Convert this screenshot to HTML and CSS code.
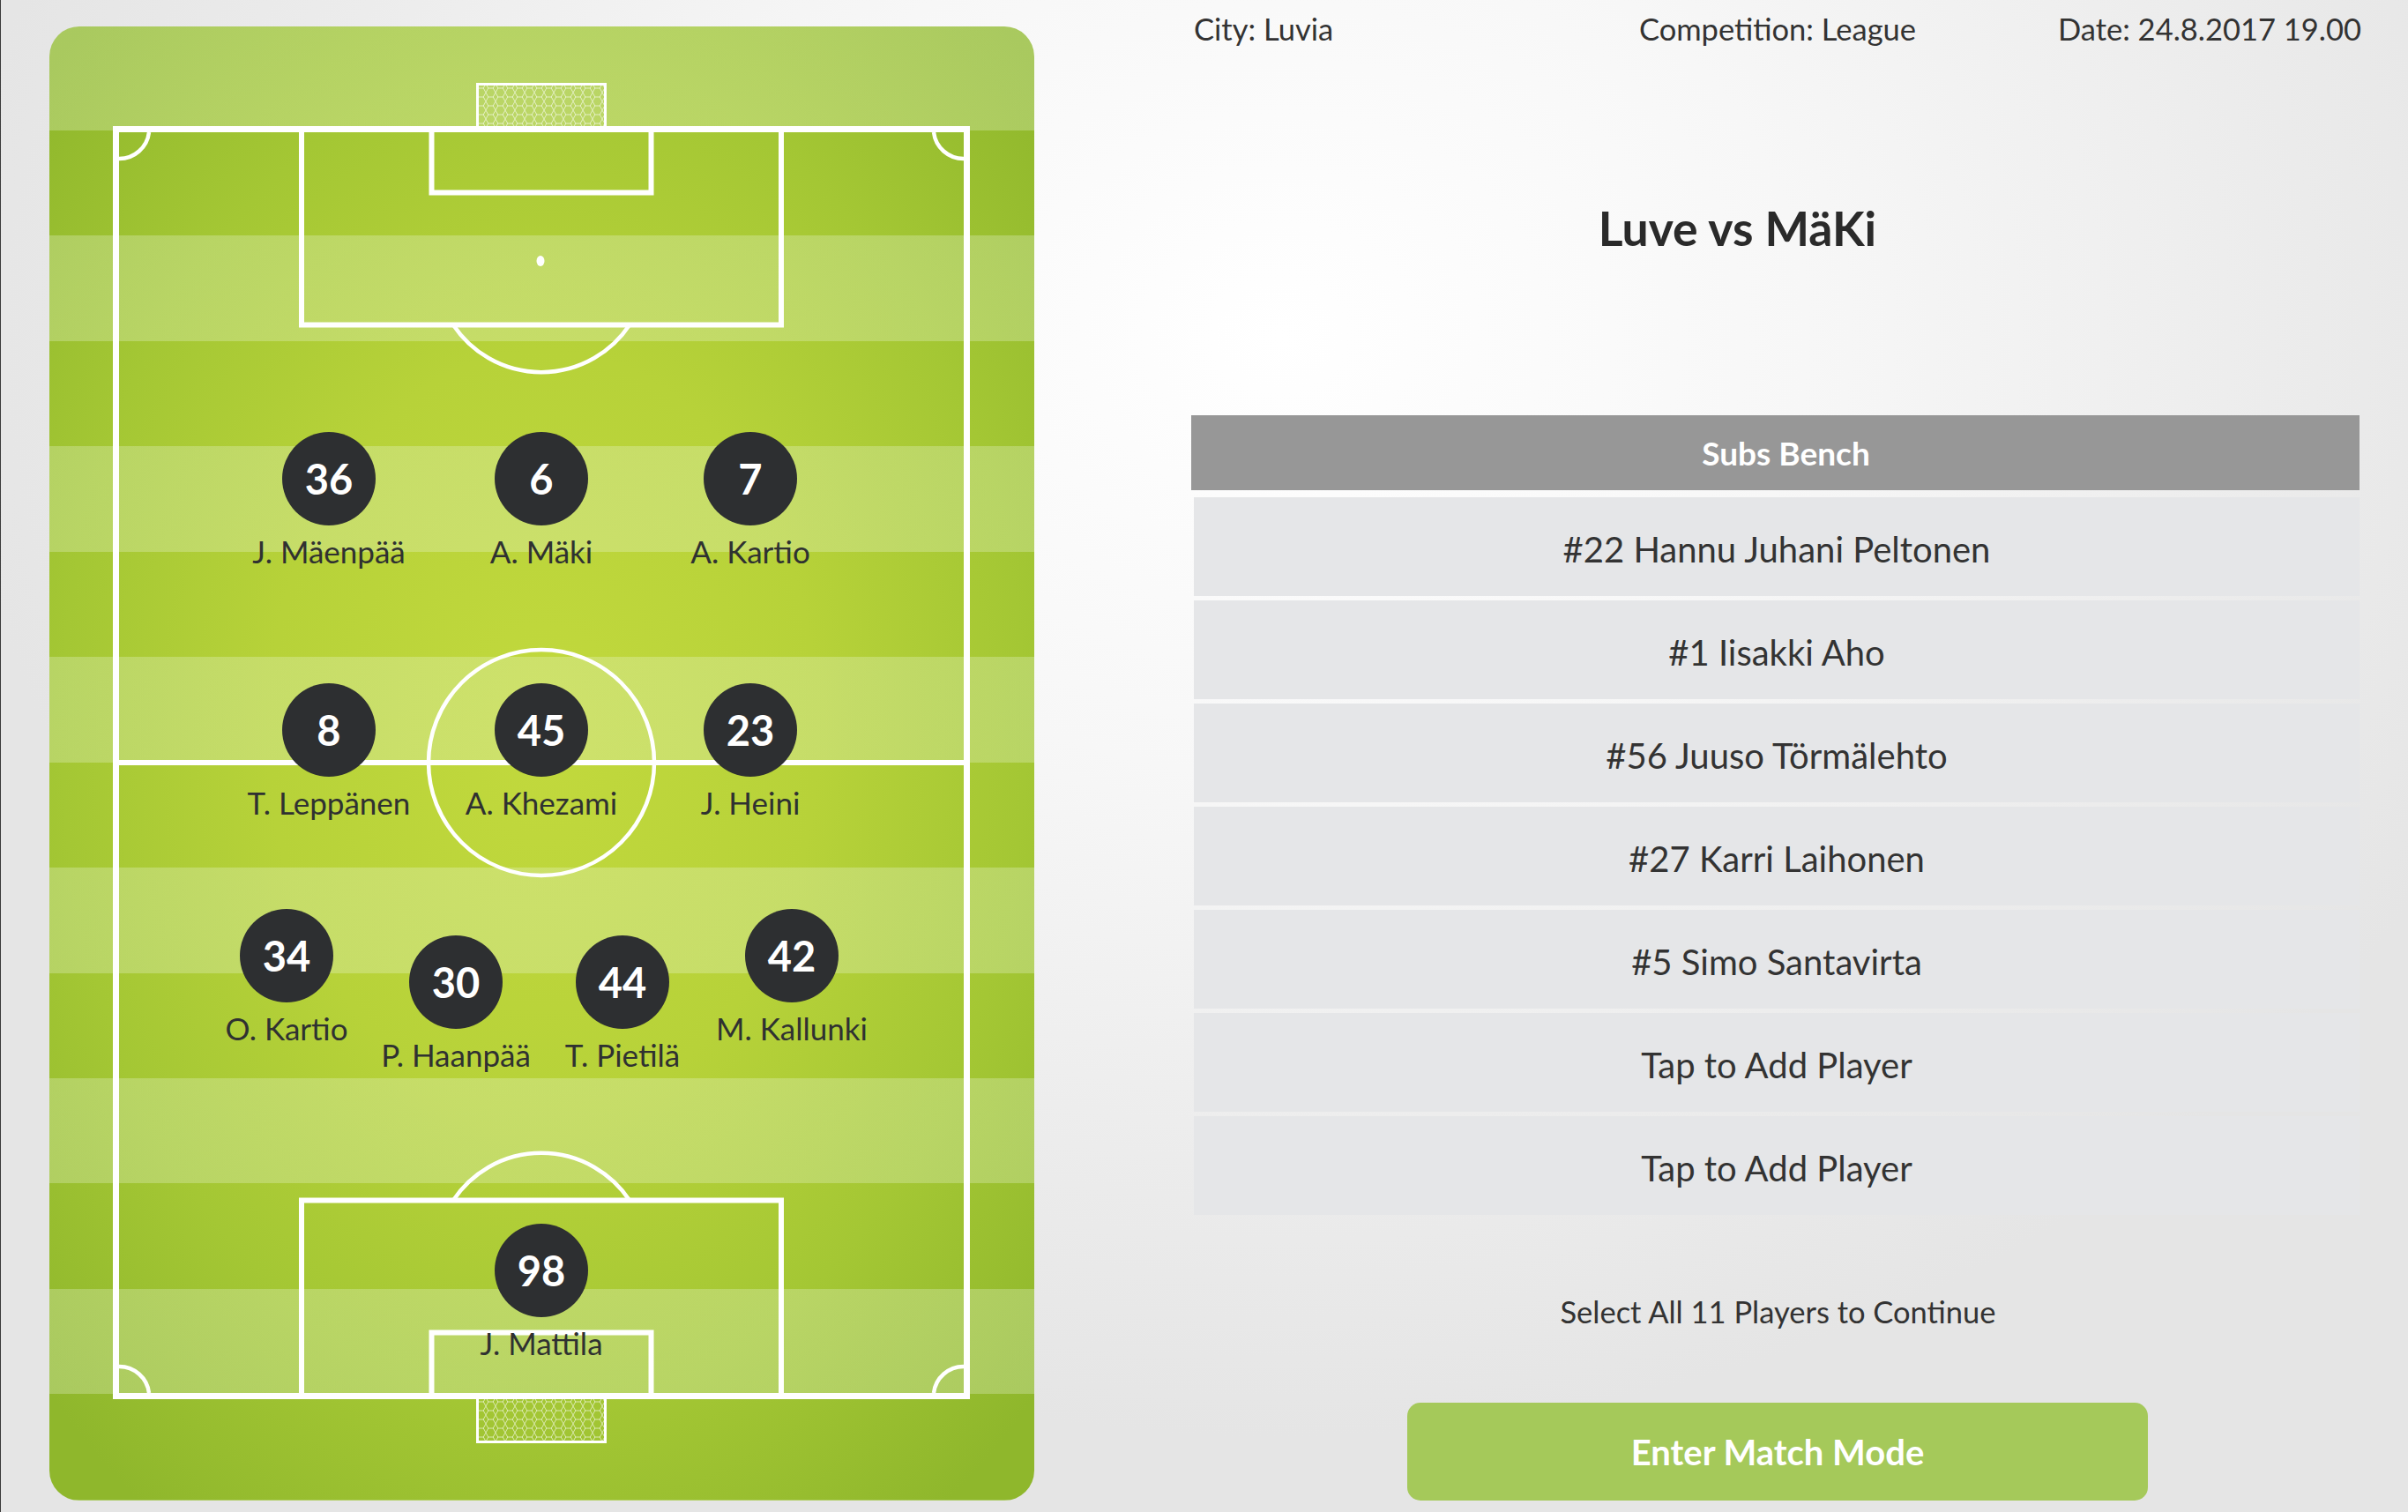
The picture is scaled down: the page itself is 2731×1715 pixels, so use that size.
FILE: index.html
```html
<!DOCTYPE html>
<html lang="fi">
<head>
<meta charset="utf-8">
<title>Luve vs MäKi – Lineup</title>
<link rel="stylesheet" href="styles.css">
</head>
<body>
<div class="screen">
  <section class="pitch">
    <svg class="markings" viewBox="0 0 1117 1672" width="1117" height="1672" aria-hidden="true">
      <defs>
        <pattern id="net" width="11" height="10" patternUnits="userSpaceOnUse">
          <path d="M2.75 0 L8.25 0 L11 5 L8.25 10 L2.75 10 L0 5 Z" fill="none" stroke="rgba(255,255,255,0.6)" stroke-width="1"/>
        </pattern>
      </defs>
      <g fill="none" stroke="#fff">
        <!-- goals -->
        <rect x="485.5" y="65.5" width="145" height="51" fill="url(#net)" stroke-width="3"/>
        <rect x="485.5" y="1553.5" width="145" height="52" fill="url(#net)" stroke-width="3"/>
        <!-- outer -->
        <rect x="75.5" y="116.5" width="965" height="1437" stroke-width="7"/>
        <line x1="75.5" y1="835" x2="1040.5" y2="835" stroke-width="6"/>
        <circle cx="558" cy="835" r="128" stroke-width="4.5"/>
        <!-- top boxes -->
        <rect x="286" y="116.5" width="544" height="222" stroke-width="6"/>
        <rect x="433.5" y="116.5" width="249" height="72" stroke-width="6"/>
        <path d="M458 338.5 A120 120 0 0 0 658 338.5" stroke-width="4.5"/>
        <!-- bottom boxes -->
        <rect x="286" y="1331.5" width="544" height="222" stroke-width="6"/>
        <rect x="433.5" y="1481.5" width="249" height="72" stroke-width="6"/>
        <path d="M458 1331.5 A120 120 0 0 1 658 1331.5" stroke-width="4.5"/>
        <!-- corners -->
        <path d="M79 150 A34 34 0 0 0 113 120" stroke-width="4.5"/>
        <path d="M1037 150 A34 34 0 0 1 1003 120" stroke-width="4.5"/>
        <path d="M79 1520 A34 34 0 0 1 113 1550" stroke-width="4.5"/>
        <path d="M1037 1520 A34 34 0 0 0 1003 1550" stroke-width="4.5"/>
      </g>
      <ellipse cx="557" cy="266" rx="4.5" ry="6" fill="#fff"/>
    </svg>

    <div class="player pos-f1"><span class="num">36</span><span class="name">J. Mäenpää</span></div>
    <div class="player pos-f2"><span class="num">6</span><span class="name">A. Mäki</span></div>
    <div class="player pos-f3"><span class="num">7</span><span class="name">A. Kartio</span></div>

    <div class="player pos-m1"><span class="num">8</span><span class="name">T. Leppänen</span></div>
    <div class="player pos-m2"><span class="num">45</span><span class="name">A. Khezami</span></div>
    <div class="player pos-m3"><span class="num">23</span><span class="name">J. Heini</span></div>

    <div class="player pos-d1"><span class="num">34</span><span class="name">O. Kartio</span></div>
    <div class="player pos-d2"><span class="num">30</span><span class="name">P. Haanpää</span></div>
    <div class="player pos-d3"><span class="num">44</span><span class="name">T. Pietilä</span></div>
    <div class="player pos-d4"><span class="num">42</span><span class="name">M. Kallunki</span></div>

    <div class="player pos-gk"><span class="num">98</span><span class="name">J. Mattila</span></div>
  </section>

  <section class="setup">
    <header class="meta">
      <span class="meta-city">City: Luvia</span>
      <span class="meta-comp">Competition: League</span>
      <span class="meta-date">Date: 24.8.2017 19.00</span>
    </header>

    <h1 class="match-title">Luve vs MäKi</h1>

    <div class="bench">
      <div class="bench-head">Subs Bench</div>
      <ul class="bench-list">
        <li>#22 Hannu Juhani Peltonen</li>
        <li>#1 Iisakki Aho</li>
        <li>#56 Juuso Törmälehto</li>
        <li>#27 Karri Laihonen</li>
        <li>#5 Simo Santavirta</li>
        <li>Tap to Add Player</li>
        <li>Tap to Add Player</li>
      </ul>
    </div>

    <p class="hint">Select All 11 Players to Continue</p>

    <button class="enter" type="button">Enter Match Mode</button>
  </section>
</div>
</body>
</html>
```

FILE: styles.css
```css
* { box-sizing: border-box; }

html, body {
  margin: 0;
  padding: 0;
}

body {
  width: 2731px;
  height: 1715px;
  overflow: hidden;
  font-family: Lato, "Open Sans", "Liberation Sans", sans-serif;
  color: #333;
  background:
    radial-gradient(ellipse 1500px 1250px at 1450px 380px, #ffffff 0%, #f7f7f7 40%, #ececec 75%, #e5e5e5 100%);
}

.screen {
  display: flex;
  align-items: flex-start;
  height: 1715px;
  border-left: 1px solid #3a3a3a;
}

/* ---------- Pitch ---------- */

.pitch {
  position: relative;
  flex: 0 0 1117px;
  width: 1117px;
  height: 1672px;
  margin: 30px 0 0 55px;
  border-radius: 34px;
  overflow: hidden;
  background:
    repeating-linear-gradient(to bottom,
      rgba(240, 250, 232, 0.27) 0px,
      rgba(240, 250, 232, 0.27) 118px,
      rgba(240, 250, 232, 0) 118px,
      rgba(240, 250, 232, 0) 237.4px,
      rgba(240, 250, 232, 0.27) 237.4px,
      rgba(240, 250, 232, 0.27) 238.9px),
    radial-gradient(ellipse 780px 1080px at 560px 800px, #c2d93d 0%, #b7d239 40%, #a4c734 70%, #8fb72c 100%);
}

.markings {
  position: absolute;
  left: 0;
  top: 0;
  display: block;
}

.player {
  position: absolute;
  width: 260px;
  margin-left: -130px;
  margin-top: -53px;
  display: flex;
  flex-direction: column;
  align-items: center;
}

.num {
  width: 106px;
  height: 106px;
  border-radius: 50%;
  background: #2d2f31;
  color: #fff;
  font-weight: 700;
  font-size: 47px;
  line-height: 106px;
  text-align: center;
}

.name {
  margin-top: 8px;
  font-size: 35px;
  line-height: 42px;
  color: #2f3131;
  white-space: nowrap;
}

.pos-f1 { left: 317px; top: 513px; }
.pos-f2 { left: 558px; top: 513px; }
.pos-f3 { left: 795px; top: 513px; }

.pos-m1 { left: 317px; top: 798px; }
.pos-m2 { left: 558px; top: 798px; }
.pos-m3 { left: 795px; top: 798px; }

.pos-d1 { left: 269px; top: 1054px; }
.pos-d2 { left: 461px; top: 1084px; }
.pos-d3 { left: 650px; top: 1084px; }
.pos-d4 { left: 842px; top: 1054px; }

.pos-gk { left: 558px; top: 1411px; }

/* ---------- Setup column ---------- */

.setup {
  flex: 0 0 1325px;
  width: 1325px;
  margin-left: 178px;
  display: flex;
  flex-direction: column;
}

.meta {
  display: grid;
  grid-template-columns: 1fr auto 1fr;
  padding: 13px 0 0 3px;
  margin-right: -2px;
  font-size: 34.5px;
  line-height: 40px;
  color: #333;
}

.meta-city { justify-self: start; }
.meta-comp { justify-self: center; }
.meta-date { justify-self: end; }

.match-title {
  margin: 174px 0 0;
  padding-right: 86px;
  text-align: center;
  font-size: 53.5px;
  line-height: 62px;
  font-weight: 700;
  color: #2a2a2a;
}

.bench {
  margin-top: 182px;
}

.bench-head {
  height: 85px;
  line-height: 85px;
  padding-left: 24px;
  background: #979797;
  color: #fff;
  font-size: 37px;
  font-weight: 700;
  text-align: center;
}

.bench-list {
  list-style: none;
  margin: 8px 0 0 3px;
  padding: 0;
  display: flex;
  flex-direction: column;
  gap: 5px;
}

.bench-list li {
  height: 112px;
  display: flex;
  align-items: center;
  justify-content: center;
  padding-top: 5px;
  background: #e5e6e8;
  font-size: 40px;
  color: #333;
}

.hint {
  margin: 89px 0 0;
  padding-left: 6px;
  text-align: center;
  font-size: 34.5px;
  line-height: 42px;
  color: #333;
}

.enter {
  align-self: center;
  margin-top: 82px;
  margin-left: 5px;
  width: 840px;
  height: 111px;
  border: 0;
  border-radius: 15px;
  background: #a5c95a;
  color: #fff;
  font-family: Lato, "Open Sans", "Liberation Sans", sans-serif;
  font-size: 40px;
  font-weight: 700;
}
```
